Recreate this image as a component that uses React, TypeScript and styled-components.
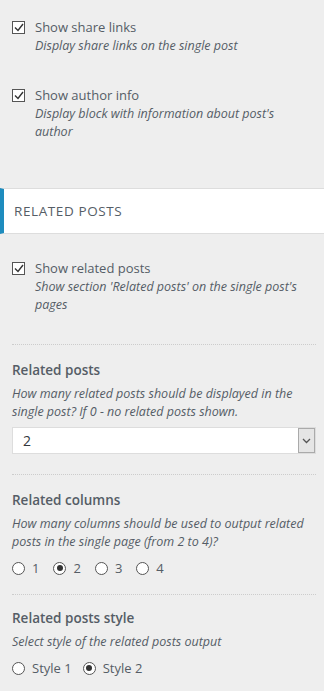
import { createGlobalStyle } from 'styled-components';
import styled from 'styled-components';

const GlobalStyle = createGlobalStyle`
    body {
        margin: 0;
        background: #eeeeee;
        font-family: "Open Sans", "Noto Sans", sans-serif;
        color: #555d66;
    }
`;

const Panel = styled.div`
    width: 324px;
    display: flex;
    flex-direction: column;
`;

const Group = styled.div<{ $top: number; $bottom: number }>`
    display: flex;
    flex-direction: column;
    padding: ${props => props.$top}px 8px ${props => props.$bottom}px 12px;
`;

const CheckRow = styled.label<{ $gap?: number }>`
    display: flex;
    align-items: flex-start;
    gap: 10px;
    margin-bottom: ${props => props.$gap ?? 0}px;
`;

const Box = styled.span`
    flex-shrink: 0;
    width: 11px;
    height: 11px;
    margin-top: 3px;
    border: 1px solid #555;
    background: #fff;
    display: flex;
    align-items: center;
    justify-content: center;
`;

const TextCol = styled.div`
    display: flex;
    flex-direction: column;
    max-width: 272px;
`;

const Label = styled.span`
    font-size: 13px;
    line-height: 19px;
`;

const Desc = styled.span`
    font-size: 12.5px;
    line-height: 18px;
    font-style: italic;
`;

const SectionHeader = styled.div`
    background: #fff;
    border-top: 1px solid #ddd;
    border-bottom: 1px solid #ddd;
    border-left: 4px solid #1e8cbe;
    height: 44px;
    display: flex;
    align-items: center;
    padding-left: 10px;
    font-size: 13.5px;
    letter-spacing: 0.6px;
    text-transform: uppercase;
    color: #555d66;
`;

const Control = styled.div<{ $pad: number; $end: number }>`
    border-top: 1px dotted #ccc;
    padding-top: ${props => props.$pad}px;
    padding-bottom: ${props => props.$end}px;
    display: flex;
    flex-direction: column;
`;

const Title = styled.div`
    font-size: 13.5px;
    font-weight: 600;
    line-height: 18px;
    margin-bottom: 6px;
`;

const SelectBox = styled.div`
    margin-top: 6px;
    height: 25px;
    border: 1px solid #ddd;
    background: #fff;
    display: flex;
    align-items: center;
    justify-content: space-between;
    font-size: 14px;
    padding-left: 10px;
    color: #32373c;
`;

const Arrow = styled.span`
    width: 15px;
    height: 23px;
    border: 1px solid #aaa;
    background: #e5e5e5;
    display: flex;
    align-items: center;
    justify-content: center;
`;

const RadioRow = styled.div<{ $gap: number }>`
    display: flex;
    align-items: center;
    gap: ${props => props.$gap}px;
    margin-top: 8px;
    font-size: 13px;
    line-height: 18px;
`;

const RadioItem = styled.label`
    display: flex;
    align-items: center;
    gap: 7px;
`;

const Circle = styled.span<{ $on?: boolean }>`
    width: 11px;
    height: 11px;
    border-radius: 50%;
    border: 1px solid #555;
    background: #fff;
    display: flex;
    align-items: center;
    justify-content: center;

    &::after {
        content: '';
        width: 6px;
        height: 6px;
        border-radius: 50%;
        background: ${props => (props.$on ? '#333' : 'transparent')};
    }
`;

function Check() {
    return (
        <Box>
            <svg width="10" height="9" viewBox="0 0 10 9">
                <path d="M1 4.5 L4 7.5 L9 1" fill="none" stroke="#333" strokeWidth="1.4" />
            </svg>
        </Box>
    );
}

function Radios({ items, active, gap }: { items: string[]; active: number; gap: number }) {
    return (
        <RadioRow $gap={gap}>
            {items.map((item, i) => (
                <RadioItem key={item}>
                    <Circle $on={i === active} />
                    {item}
                </RadioItem>
            ))}
        </RadioRow>
    );
}

export default function App() {
    return (
        <Panel>
            <GlobalStyle />
            <Group $top={18} $bottom={47}>
                <CheckRow $gap={31}>
                    <Check />
                    <TextCol>
                        <Label>Show share links</Label>
                        <Desc>Display share links on the single post</Desc>
                    </TextCol>
                </CheckRow>
                <CheckRow>
                    <Check />
                    <TextCol>
                        <Label>Show author info</Label>
                        <Desc>Display block with information about post's author</Desc>
                    </TextCol>
                </CheckRow>
            </Group>
            <SectionHeader>Related posts</SectionHeader>
            <Group $top={25} $bottom={0}>
                <CheckRow $gap={30}>
                    <Check />
                    <TextCol>
                        <Label>Show related posts</Label>
                        <Desc>Show section 'Related posts' on the single post's pages</Desc>
                    </TextCol>
                </CheckRow>
                <Control $pad={16} $end={20}>
                    <Title>Related posts</Title>
                    <Desc>How many related posts should be displayed in the single post? If 0 - no related posts shown.</Desc>
                    <SelectBox>
                        2
                        <Arrow>
                            <svg width="9" height="6" viewBox="0 0 9 6">
                                <path d="M1 1 L4.5 4.5 L8 1" fill="none" stroke="#555" strokeWidth="1.3" />
                            </svg>
                        </Arrow>
                    </SelectBox>
                </Control>
                <Control $pad={16} $end={17}>
                    <Title>Related columns</Title>
                    <Desc>How many columns should be used to output related posts in the single page (from 2 to 4)?</Desc>
                    <Radios items={['1', '2', '3', '4']} active={1} gap={14} />
                </Control>
                <Control $pad={14} $end={0}>
                    <Title>Related posts style</Title>
                    <Desc>Select style of the related posts output</Desc>
                    <Radios items={['Style 1', 'Style 2']} active={1} gap={11} />
                </Control>
            </Group>
        </Panel>
    );
}
